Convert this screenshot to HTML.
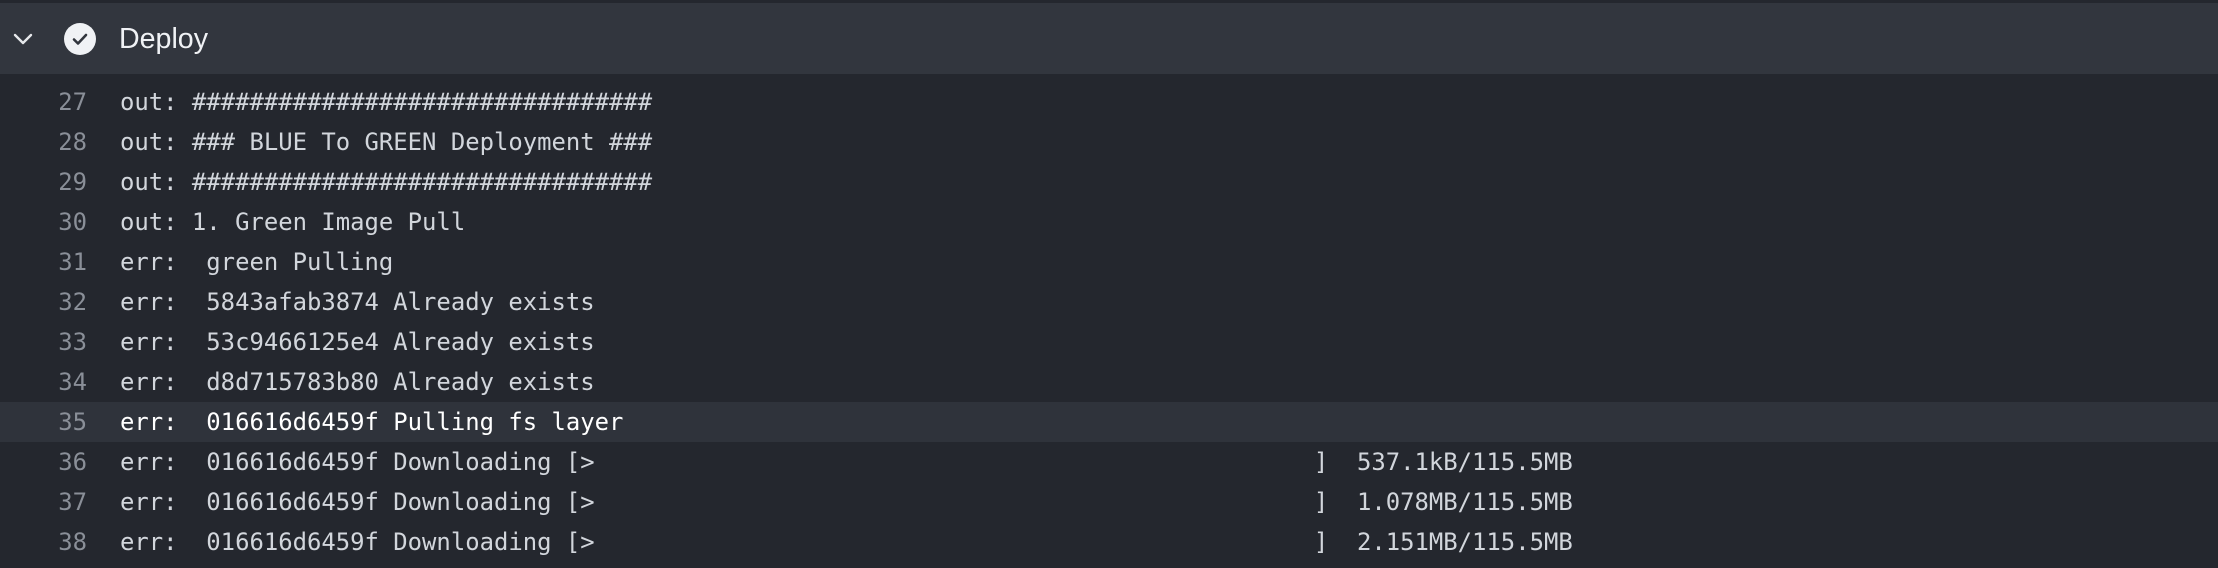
<!DOCTYPE html>
<html><head><style>
html,body{margin:0;padding:0;width:2218px;height:568px;overflow:hidden;background:#24272e}
.top{position:absolute;left:0;top:0;width:2218px;height:3px;background:#24272e}
.hdr{position:absolute;left:0;top:3px;width:2218px;height:71px;background:#32363e}
.title{position:absolute;left:119px;top:20px;font:28.6px "Liberation Sans",sans-serif;color:#f0f2f5}
.rows{position:absolute;left:0;top:82px;width:2218px}
.r{height:40px;line-height:40px;position:relative;font-family:"DejaVu Sans Mono",monospace;font-size:23.9px;color:#d2d6dc;white-space:pre}
.r.h{background:#2f333b;color:#fff}
.n{position:absolute;right:calc(2218px - 87px);color:#8a8f98}
.t{position:absolute;left:120px}
</style></head><body>
<div class="top"></div>
<div class="hdr">
<svg style="position:absolute;left:12px;top:29px" width="22" height="14" viewBox="0 0 22 14"><path d="M3 3 L11 11 L19 3" stroke="#e6e8eb" stroke-width="2.4" fill="none" stroke-linecap="round" stroke-linejoin="round"/></svg>
<svg style="position:absolute;left:63px;top:19px" width="34" height="34" viewBox="0 0 34 34"><circle cx="17" cy="17" r="16" fill="#f0f2f5"/><path d="M11 17.5 L15 21.5 L23 13" stroke="#32363e" stroke-width="2.6" fill="none" stroke-linecap="round" stroke-linejoin="round"/></svg>
<div class="title">Deploy</div>
</div>
<div class="rows">
<div class="r"><span class="n">27</span><span class="t">out: ################################</span></div>
<div class="r"><span class="n">28</span><span class="t">out: ### BLUE To GREEN Deployment ###</span></div>
<div class="r"><span class="n">29</span><span class="t">out: ################################</span></div>
<div class="r"><span class="n">30</span><span class="t">out: 1. Green Image Pull</span></div>
<div class="r"><span class="n">31</span><span class="t">err:  green Pulling</span></div>
<div class="r"><span class="n">32</span><span class="t">err:  5843afab3874 Already exists</span></div>
<div class="r"><span class="n">33</span><span class="t">err:  53c9466125e4 Already exists</span></div>
<div class="r"><span class="n">34</span><span class="t">err:  d8d715783b80 Already exists</span></div>
<div class="r h"><span class="n">35</span><span class="t">err:  016616d6459f Pulling fs layer</span></div>
<div class="r"><span class="n">36</span><span class="t">err:  016616d6459f Downloading [>                                                  ]  537.1kB/115.5MB</span></div>
<div class="r"><span class="n">37</span><span class="t">err:  016616d6459f Downloading [>                                                  ]  1.078MB/115.5MB</span></div>
<div class="r"><span class="n">38</span><span class="t">err:  016616d6459f Downloading [>                                                  ]  2.151MB/115.5MB</span></div>
</div>
</body></html>
